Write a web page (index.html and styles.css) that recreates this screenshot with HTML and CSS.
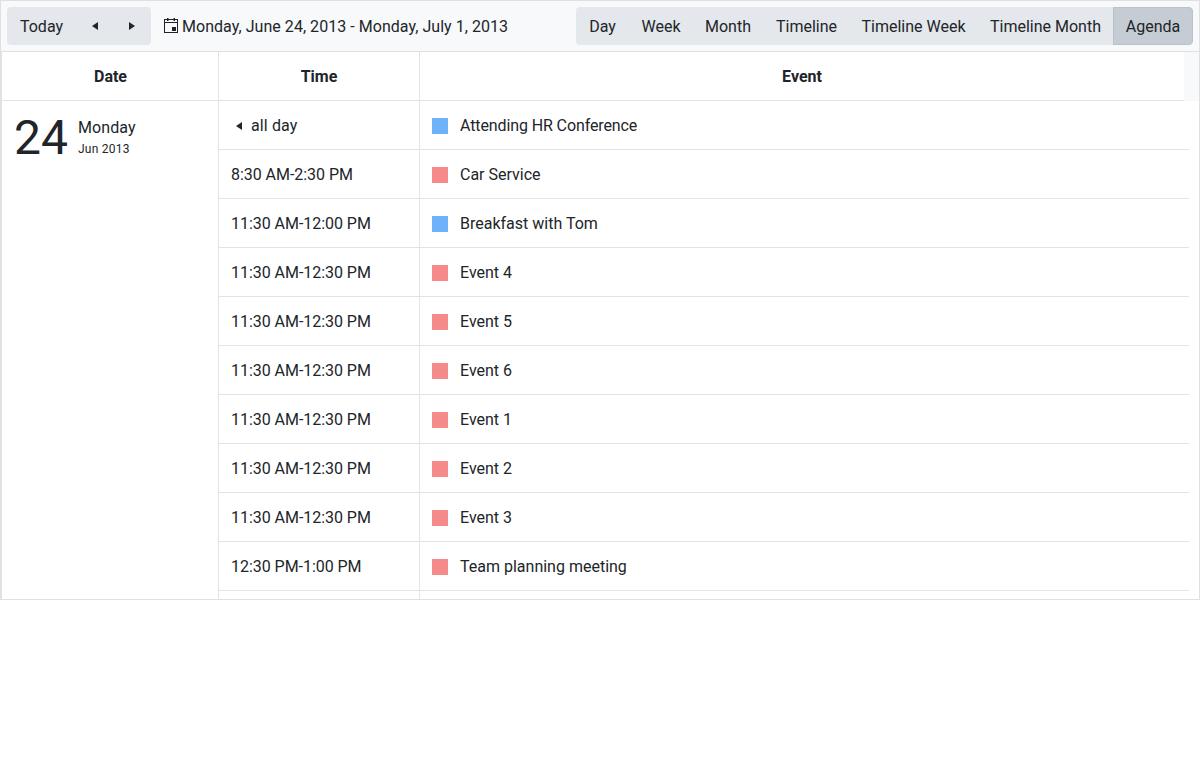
FILE: index.html
```
<!DOCTYPE html>
<html lang="en">
<head>
<meta charset="utf-8">
<title>Scheduler</title>
<link rel="stylesheet" href="styles.css">
</head>
<body>
<div class="scheduler">
  <header class="toolbar">
    <div class="group">
      <button class="btn today">Today</button>
      <button class="btn icon-btn" aria-label="Previous"><svg class="icon" viewBox="0 0 16 16"><path d="M11 4v8L5 8z"/></svg></button>
      <button class="btn icon-btn" aria-label="Next"><svg class="icon" viewBox="0 0 16 16"><path d="M5 4v8l6-4z"/></svg></button>
    </div>
    <div class="range"><svg class="icon" viewBox="0 0 16 16"><path fill-rule="evenodd" d="M1 1h14v14H1zM2 2v2h12V2zM2 5v9h12V5zM9 9h4v4H9z"/><path d="M4 0h1.5v3H4zM10.5 0H12v3h-1.5z"/></svg><span>Monday, June 24, 2013 - Monday, July 1, 2013</span></div>
    <div class="group views">
      <button class="btn">Day</button>
      <button class="btn">Week</button>
      <button class="btn">Month</button>
      <button class="btn">Timeline</button>
      <button class="btn">Timeline Week</button>
      <button class="btn">Timeline Month</button>
      <button class="btn selected">Agenda</button>
    </div>
  </header>
  <div class="head">
    <div class="th">Date</div>
    <div class="th">Time</div>
    <div class="th">Event</div>
  </div>
  <div class="content">
    <div class="date"><span class="day">24</span><div class="weekday">Monday<small>Jun 2013</small></div></div>
    <div class="rows">
      <div class="row"><div class="time all-day"><svg class="icon" viewBox="0 0 16 16"><path d="M11 4v8L5 8z"/></svg>all day</div><div class="event tight"><i class="mark blue"></i>Attending HR Conference</div></div>
      <div class="row"><div class="time">8:30 AM-2:30 PM</div><div class="event"><i class="mark"></i>Car Service</div></div>
      <div class="row"><div class="time">11:30 AM-12:00 PM</div><div class="event"><i class="mark blue"></i>Breakfast with Tom</div></div>
      <div class="row"><div class="time">11:30 AM-12:30 PM</div><div class="event"><i class="mark"></i>Event 4</div></div>
      <div class="row"><div class="time">11:30 AM-12:30 PM</div><div class="event"><i class="mark"></i>Event 5</div></div>
      <div class="row"><div class="time">11:30 AM-12:30 PM</div><div class="event"><i class="mark"></i>Event 6</div></div>
      <div class="row"><div class="time">11:30 AM-12:30 PM</div><div class="event"><i class="mark"></i>Event 1</div></div>
      <div class="row"><div class="time">11:30 AM-12:30 PM</div><div class="event"><i class="mark"></i>Event 2</div></div>
      <div class="row"><div class="time">11:30 AM-12:30 PM</div><div class="event"><i class="mark"></i>Event 3</div></div>
      <div class="row"><div class="time">12:30 PM-1:00 PM</div><div class="event"><i class="mark"></i>Team planning meeting</div></div>
      <div class="row"><div class="time"></div><div class="event"></div></div>
    </div>
  </div>
</div>
</body>
</html>
```
FILE: styles.css
```
* { box-sizing: border-box; }
body { margin: 0; background: #fff; }
.scheduler {
  display: flex;
  flex-direction: column;
  height: 600px;
  border: 1px solid #dfe0e1;
  overflow: hidden;
  font: 16px/24px Roboto, sans-serif;
  color: #212529;
}
.toolbar {
  display: flex;
  flex: none;
  align-items: center;
  height: 51px;
  padding: 0 6px;
  background: #f8f9fb;
  border-bottom: 1px solid #dee0e2;
}
.group { display: flex; border-radius: 4px; overflow: hidden; background: #e4e7eb; }
.btn {
  flex: none;
  height: 38px;
  padding: 7px 0 5px;
  border: 1px solid transparent;
  background: none;
  font: inherit;
  color: inherit;
  white-space: nowrap;
}
.btn + .btn { margin-left: -1px; }
.today { width: 69px; }
.icon-btn { display: flex; align-items: center; justify-content: center; width: 38px; padding: 0; }
.group .today + .icon-btn { margin-left: 0; }
.selected { background: #c6ccd4; border-color: #bac1ca; border-radius: 0 4px 4px 0; }
.icon { display: block; flex: none; width: 16px; height: 16px; fill: currentColor; }
.range { display: flex; align-items: center; gap: 3px; margin-left: 12px; letter-spacing: 0.04px; }
.range span { padding-top: 2px; }
.range .icon { margin-bottom: 0; }
.views { margin-left: auto; display: grid; grid-template-columns: 53px 63px 71px 86px 128px 136px 80px; }
.views .btn + .btn { margin-left: 0; }
.views .btn:not(.selected):not(:first-child) { padding-left: 1px; }
.head {
  display: flex;
  flex: none;
  height: 49px;
  padding-right: 15px;
  border-left: 1px solid #e2e3e4;
  background: #f8f9fb;
}
.th {
  width: 201px;
  padding: 13px 12px 11px;
  border-bottom: 1px solid #e2e3e4;
  border-left: 1px solid #e2e3e4;
  background: #fff;
  text-align: center;
  font-weight: 700;
}
.th:first-child { width: 216px; padding-left: 13px; border-left: 0; }
.th:last-child { flex: 1; }
.content {
  display: flex;
  flex: 1;
  min-height: 0;
  padding-right: 10px;
  border-left: 1px solid #e2e3e4;
}
.date { display: flex; align-items: flex-start; width: 216px; padding: 12px; }
.day { width: 64px; padding-top: 1px; font-size: 48px; line-height: 48px; }
.weekday { padding-top: 3px; letter-spacing: 0.08px; }
.weekday small { display: block; font-size: 12px; line-height: 18px; letter-spacing: 0.25px; }
.rows { flex: 1; overflow: hidden; }
.row { display: flex; height: 49px; border-bottom: 1px solid #e2e3e4; }
.time, .event { display: flex; align-items: center; padding: 2px 12px 0; border-left: 1px solid #e2e3e4; }
.time { width: 201px; letter-spacing: -0.04px; }
.all-day { letter-spacing: 0.12px; }
.time .icon { margin-right: 4px; }
.event { flex: 1; }
.tight { letter-spacing: -0.11px; }
.mark { width: 16px; height: 16px; margin-right: 12px; background: #f58a8a; }
.mark.blue { background: #6eb3fa; }
```
